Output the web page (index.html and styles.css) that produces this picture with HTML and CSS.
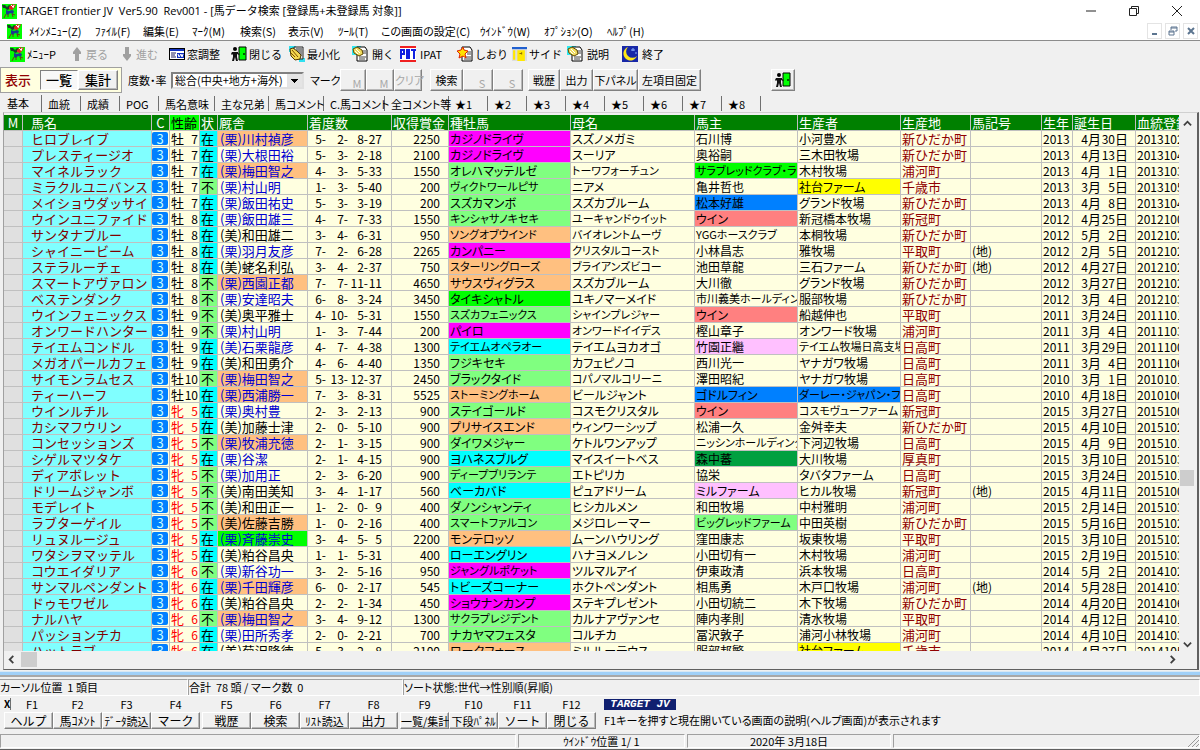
FILE: index.html
```html
<!DOCTYPE html>
<html lang="ja">
<head>
<meta charset="utf-8">
<title>TARGET frontier JV</title>
<link rel="stylesheet" href="styles.css">
</head>
<body>
<svg class="defs" aria-hidden="true">
  <symbol id="horse" viewBox="0 0 15 15">
    <rect width="15" height="15" fill="#0f0"/>
    <path d="M0 1h3l2 2 2-2 2 1-1 3-3 1-2-2H1z" fill="#1c3c2a"/>
    <path d="M7 3l3-3 2 1 2-1-1 3-3 3-3-1z" fill="#e02020"/>
    <path d="M9 1l2 2M12 1l-1 3" stroke="#fff"/>
    <path d="M4 6l3 1 3-1 2 1-1 3-3-1-2 2-2-1z" fill="#1a3a90"/>
    <path d="M2 14l2-4M6 13v-3M11 13l-1-3 3 1" stroke="#703818" fill="none"/>
  </symbol>
  <symbol id="up" viewBox="0 0 10 16"><path d="M5 1l4 5v2H7v7H3V8H1V6z" fill="#a0a0a0"/></symbol>
  <symbol id="down" viewBox="0 0 10 16"><path d="M5 15l4-5V8H7V1H3v7H1v2z" fill="#a0a0a0"/></symbol>
  <symbol id="window" viewBox="0 0 16 14">
    <path d="M0 1h16v12H0z" fill="#000"/><path d="M1 4h14v8H1z" fill="#fff"/><path d="M1 2h14v2H1z" fill="#1030c0"/>
    <path d="M2 6h5M2 8h4M2 10h5" stroke="#202060"/><path d="M8 6h7v5H8z" fill="#1030c0"/><path d="M9 7l1 3 2-3 1 3 1-3" stroke="#fff" fill="none"/>
  </symbol>
  <symbol id="exit" viewBox="0 0 16 16">
    <path d="M8 1h7v13H8z" fill="#0f0" stroke="#000"/><path d="M12 7h2v2h-2z" fill="#006000"/>
    <circle cx="4" cy="3" r="2"/><path d="M1 6h6v1l2 1-1 1-2-1v3l1 4H5l-1-4-1 4H1l1-4V8L1 9 0 8z" fill="#111"/>
  </symbol>
  <symbol id="note" viewBox="0 0 16 16">
    <path d="M0 0h9v9H0z" fill="#30e8f0"/><path d="M5 1h8l2 3v11H5z" fill="#fff" stroke="#000"/>
    <path d="M10 5h4M11 7h3M7 11h7M7 13h6" stroke="#444"/>
    <path d="M1 3l4-2 5 3 1 4-4 2-5-3z" fill="#f0dc60" stroke="#604800"/><path d="M4 3l4 4M3 5l3 3" stroke="#fff"/>
  </symbol>
  <symbol id="mini" viewBox="0 0 16 16">
    <path d="M0 0h7v6H0zM10 12h6v4h-6z" fill="#30e0f0"/><path d="M5 1h9v12H5z" fill="#e8e8e8" stroke="#222"/><path d="M7 3h6M8 5h5M10 7h3M10 9h3" stroke="#333"/>
    <path d="M1 3l3-1 4 3 4 4-1 4-5 1-4-4z" fill="#f4d850" stroke="#503800"/><path d="M3 4l6 7M2 7l4 4" stroke="#805000"/>
  </symbol>
  <symbol id="pat" viewBox="0 0 16 16">
    <path d="M0 0h16v16H0z" fill="#fff"/><path d="M0 0h16v2H0zM0 14h16v2H0z" fill="#f02020"/>
    <path d="M1 13V4h3v4H2M7 13V4h2v9M7 9h2M11 4h5M14 4v9" stroke="#1020e0" stroke-width="2" fill="none"/>
  </symbol>
  <symbol id="star" viewBox="0 0 16 16">
    <path d="M5 1h8l2 3v11H5z" fill="#fff" stroke="#000"/><path d="M10 6h4M10 8h4M8 11h6M7 13h7" stroke="#444"/>
    <path d="M6 1l1 3 4 1-3 3 1 4-3-2-4 2 1-4-3-3 4-1z" fill="#ffe000" stroke="#e02000"/>
  </symbol>
  <symbol id="side" viewBox="0 0 14 14">
    <path d="M0 0h14v13H0z" fill="#ddd"/><path d="M0 0h14v2H0z" fill="#2060d0"/><path d="M1 3h2v9H1zM5 3h7v10H5z" fill="#ffe800"/>
    <path d="M7 6h2M9 5v2" stroke="#907000"/>
  </symbol>
  <symbol id="moon" viewBox="0 0 16 16">
    <path d="M0 0h16v16H0z" fill="#1828a8"/><path d="M6 1a7 7 0 1 0 9 9 6 6 0 0 1-9-9z" fill="#ffe818"/>
    <path d="M11 2v3M9 4h4M14 6v2" stroke="#8ab0ff"/>
  </symbol>
</svg>

<header class="titlebar">
  <svg class="ico15"><use href="#horse"/></svg>
  <h1>TARGET frontier JV&nbsp; Ver5.90&nbsp; Rev001 - [馬データ検索 [登録馬+未登録馬 対象]]</h1>
  <div class="winbtns">
    <button aria-label="最小化"><svg viewBox="0 0 12 12"><path d="M1 6h10" stroke="#222"/></svg></button>
    <button aria-label="元に戻す"><svg viewBox="0 0 12 12"><path d="M1.500 3.500h7v7h-7zM3.500 3V1.500h7v7H9" stroke="#222" fill="none"/></svg></button>
    <button aria-label="閉じる"><svg viewBox="0 0 12 12"><path d="M1 1l10 10M11 1L1 11" stroke="#222"/></svg></button>
  </div>
</header>

<div class="menubar">
  <svg class="ico15"><use href="#horse"/></svg>
  <nav class="menu">
    <button>ﾒｲﾝﾒﾆｭｰ(Z)</button><button>ﾌｧｲﾙ(F)</button><button>編集(E)</button><button>ﾏｰｸ(M)</button><button>検索(S)</button><button>表示(V)</button><button>ﾂｰﾙ(T)</button><button>この画面の設定(C)</button><button>ｳｲﾝﾄﾞｳ(W)</button><button>ｵﾌﾟｼｮﾝ(O)</button><button>ﾍﾙﾌﾟ(H)</button>
  </nav>
  <div class="mdibtns">
    <button aria-label="子画面を最小化"><svg viewBox="0 0 10 10"><path d="M2 8h5" stroke="#5c7590" stroke-width="2"/></svg></button>
    <button aria-label="子画面を元に戻す"><svg viewBox="0 0 10 10"><path d="M1 5h5v4H1zM3 4V1h6v4H7M3 2h6M1 6h5" stroke="#5c7590" fill="none"/></svg></button>
    <button aria-label="子画面を閉じる"><svg viewBox="0 0 10 10"><path d="M2 2l6 6M8 2L2 8" stroke="#5c7590" stroke-width="2"/></svg></button>
  </div>
</div>

<div class="toolbar">
  <button class="tool"><svg class="ico15"><use href="#horse"/></svg>ﾒﾆｭｰP</button>
  <button class="tool" disabled><svg class="arrow"><use href="#up"/></svg>戻る</button>
  <button class="tool" disabled><svg class="arrow"><use href="#down"/></svg>進む</button>
  <button class="tool"><svg class="ico16"><use href="#window"/></svg>窓調整</button>
  <button class="tool"><svg class="ico16"><use href="#exit"/></svg>閉じる</button>
  <button class="tool"><svg class="ico16"><use href="#mini"/></svg>最小化</button>
  <button class="tool spaced"><svg class="ico16"><use href="#note"/></svg>開く</button>
  <button class="tool spaced"><svg class="ico16"><use href="#pat"/></svg>IPAT</button>
  <button class="tool"><svg class="ico16"><use href="#star"/></svg>しおり</button>
  <button class="tool"><svg class="ico15"><use href="#side"/></svg>サイド</button>
  <button class="tool spaced"><svg class="ico16"><use href="#note"/></svg>説明</button>
  <button class="tool spaced"><svg class="ico16"><use href="#moon"/></svg>終了</button>
</div>

<div class="controls">
  <div class="viewbox"><strong>表示</strong><button class="raised pressed">一覧</button><button class="raised">集計</button></div>
  <label for="rate">度数・率</label>
  <select id="rate"><option>総合(中央+地方+海外)</option></select>
  <span class="marklabel">マーク</span>
  <div class="group marks"><button class="raised low" disabled>M</button><button class="raised low" disabled>M</button><button class="raised" disabled>クリア</button></div>
  <div class="group search"><button class="raised">検索</button><button class="raised low" disabled>S</button><button class="raised low" disabled>S</button></div>
  <div class="group output"><button class="raised">戦歴</button><button class="raised">出力</button><button class="raised">下パネル</button><button class="raised">左項目固定</button></div>
  <button class="raised exit" aria-label="画面を閉じる"><svg class="ico16"><use href="#exit"/></svg></button>
</div>

<nav class="tabs">
  <button class="active">基本</button><button>血統</button><button>成績</button><button>POG</button><button>馬名意味</button><button>主な兄弟</button><button>馬コメント</button><button>C.馬コメント</button><button>全コメント等</button><button>★1</button><button>★2</button><button>★3</button><button>★4</button><button>★5</button><button>★6</button><button>★7</button><button>★8</button>
</nav>

<main class="panel">
  <div class="view">
    <table class="horses">
      <colgroup>
        <col class="c-m"><col class="c-name"><col class="c-c"><col class="c-sex"><col class="c-st"><col class="c-stable"><col class="c-rec"><col class="c-prize"><col class="c-sire"><col class="c-dam"><col class="c-owner"><col class="c-breeder"><col class="c-place"><col class="c-sign"><col class="c-year"><col class="c-birth"><col class="c-id">
      </colgroup>
      <thead><tr><th class="center">M</th><th class="name">馬名</th><th class="center">C</th><th class="sorted">性齢</th><th>状</th><th>厩舎</th><th>着度数</th><th>収得賞金</th><th>種牡馬</th><th>母名</th><th>馬主</th><th>生産者</th><th>生産地</th><th>馬記号</th><th>生年</th><th>誕生日</th><th>血統登録番号</th></tr></thead>
      <tbody id="rows"></tbody>
    </table>
  </div>
  <div class="vscroll"><svg viewBox="0 0 10 10"><path d="M1 7l4-4 4 4" class="chev"/></svg><i class="thumb"></i><svg viewBox="0 0 10 10"><path d="M1 3l4 4 4-4" class="chev"/></svg></div>
  <div class="hscroll"><svg viewBox="0 0 10 10"><path d="M7 1L3 5l4 4" class="chev"/></svg><i class="thumb"></i><svg viewBox="0 0 10 10"><path d="M3 1l4 4-4 4" class="chev"/></svg></div>
</main>
<div class="splitter"></div>

<div class="summary"><span>カーソル位置&nbsp; 1 頭目</span><span>合計&nbsp; 78 頭 / マーク数&nbsp; 0</span><span>ソート状態:世代→性別順(昇順)</span></div>

<footer class="keys">
  <div class="keygroup">
    <div class="key"><label for="f1"><b class="x">X</b>F1</label><button id="f1" class="raised">ヘルプ</button></div>
    <div class="key"><label for="f2">F2</label><button id="f2" class="raised">馬ｺﾒﾝﾄ</button></div>
    <div class="key"><label for="f3">F3</label><button id="f3" class="raised long">ﾃﾞｰﾀ読込</button></div>
    <div class="key"><label for="f4">F4</label><button id="f4" class="raised">マーク</button></div>
  </div>
  <div class="keygroup">
    <div class="key"><label for="f5">F5</label><button id="f5" class="raised">戦歴</button></div>
    <div class="key"><label for="f6">F6</label><button id="f6" class="raised">検索</button></div>
    <div class="key"><label for="f7">F7</label><button id="f7" class="raised long">ﾘｽﾄ読込</button></div>
    <div class="key"><label for="f8">F8</label><button id="f8" class="raised">出力</button></div>
  </div>
  <div class="keygroup">
    <div class="key"><label for="f9">F9</label><button id="f9" class="raised long">一覧/集計</button></div>
    <div class="key"><label for="f10">F10</label><button id="f10" class="raised long">下段ﾊﾟﾈﾙ</button></div>
    <div class="key"><label for="f11">F11</label><button id="f11" class="raised">ソート</button></div>
    <div class="key"><label for="f12">F12</label><button id="f12" class="raised">閉じる</button></div>
  </div>
  <div class="help"><span class="brand">TARGET JV</span><p>F1キーを押すと現在開いている画面の説明(ヘルプ画面)が表示されます</p></div>
</footer>

<div class="statusbar">
  <span></span><span>ｳｲﾝﾄﾞｳ位置 1/ 1</span><span>2020年 3月18日</span>
  <span class="grip"><svg viewBox="0 0 12 12"><path d="M1 12L12 1M5 12l7-7M9 12l3-3" stroke="#999"/></svg></span>
</div>
<script src="rows.js"></script>
</body>
</html>
```

FILE: styles.css
```css
* { box-sizing: border-box; }
body {
  margin: 0;
  height: 100vh;
  display: flex;
  flex-direction: column;
  overflow: hidden;
  background: #f0f0f0;
  color: #000;
  font: 11px/16px "Noto Sans CJK JP", sans-serif;
}
button {
  font: inherit;
  color: inherit;
  padding: 0;
  border: 0;
  background: none;
  white-space: nowrap;
  text-align: left;
}
svg { flex: none; }
.defs { display: none; }
.ico15 { width: 15px; height: 15px; }
.ico16 { width: 16px; height: 16px; }
.arrow { width: 10px; height: 16px; }

.titlebar {
  display: flex;
  align-items: center;
  height: 22px;
  padding-left: 2px;
  gap: 2px;
  background: #fff;
}
h1 { margin: 0; flex: 1; font: 11px/16px "Open Sans", "Noto Sans CJK JP", sans-serif; }
.winbtns { display: flex; gap: 31px; padding-right: 17px; }
.winbtns button, .winbtns svg { display: block; width: 12px; height: 12px; }

.menubar {
  display: flex;
  align-items: center;
  height: 19px;
  padding: 0 2px 0 7px;
  gap: 7px;
  background: #fff;
  border-bottom: 1px solid #8c8c8c;
  font-feature-settings: "palt";
}
.menu {
  flex: 1;
  display: grid;
  grid-template-columns: 66px 48px 49px 48px 48px 50px 43px 99px 64px 63px 60px;
}
.mdibtns { display: flex; gap: 3px; }
.mdibtns button { width: 15px; height: 16px; border: 1px solid #e4e4e4; padding: 2px; }
.mdibtns svg { display: block; width: 10px; height: 10px; }

.toolbar {
  display: grid;
  grid-template-columns: 62px 50px 47px 62px 58px 63px 48px 57px 55px 55px 55px 60px;
  height: 26px;
  padding-left: 10px;
  align-items: center;
}
.tool { display: flex; align-items: center; gap: 2px; }
.tool.spaced { gap: 4px; }
.tool:disabled { color: #a0a0a0; gap: 4px; }

.controls { display: flex; align-items: center; height: 26px; font-feature-settings: "palt"; white-space: nowrap; }
.viewbox {
  display: grid;
  grid-template-columns: 35px 38px 40px;
  align-items: center;
  width: 122px;
  height: 26px;
  padding: 0 4px;
  margin-right: 6px;
  background: #ffffe0;
  border: 1px solid #a0a0a0;
  font-size: 13px;
}
.viewbox strong { color: #900000; font-weight: 500; }
.viewbox .raised { height: 20px; line-height: 18px; font-weight: 500; }
.controls label { width: 43px; }
select {
  width: 133px;
  height: 17px;
  padding: 0 0 0 2px;
  border: 2px solid;
  border-color: #808080 #e0e0e0 #e0e0e0 #808080;
  border-radius: 0;
  appearance: none;
  font: inherit;
  line-height: 13px;
  color: #000;
  background:
    linear-gradient(#000, #000) right 4px top 5px / 7px 1px no-repeat,
    linear-gradient(#000, #000) right 5px top 6px / 5px 1px no-repeat,
    linear-gradient(#000, #000) right 6px top 7px / 3px 1px no-repeat,
    linear-gradient(#000, #000) right 7px top 8px / 1px 1px no-repeat,
    linear-gradient(#e4e4e4, #e4e4e4) right / 15px 100% no-repeat,
    #fff;
}
.marklabel { width: 30px; margin-left: 6px; }
.raised {
  height: 22px;
  border: 1px solid;
  border-color: #fff #808080 #808080 #fff;
  box-shadow: inset -1px -1px #b8b8b8;
  background: #f0f0f0;
  text-align: center;
}
.raised:disabled { color: #a8a8a8; }
.raised.pressed { border-color: #808080 #fff #fff #808080; box-shadow: none; background: #f8f8f8; }
.raised.low { padding: 5px 0 0 8px; line-height: 14px; }
.group { display: grid; }
.marks { grid-template-columns: 26px 28px 28px; margin-right: 8px; }
.search { grid-template-columns: 33px 30px 30px; margin-right: 5px; }
.output { grid-template-columns: 32px 33px 45px 63px; }
.exit { display: grid; place-items: center; width: 24px; margin-left: 70px; }

.tabs {
  display: grid;
  grid-template-columns: 42px 39px 39px 39px 56px 54px 55px 61px 64px repeat(8, 39px);
  height: 19px;
  padding-top: 2px;
  font-feature-settings: "palt";
}
.tabs button { margin-top: 1px; height: 15px; padding-left: 6px; border-right: 1px solid #707070; }
.tabs .active { margin: 0; height: 17px; padding: 0 0 3px 7px; }

.panel {
  flex: 1;
  min-height: 0;
  display: grid;
  grid-template: minmax(0, 1fr) 18px / minmax(0, 1fr) 16px;
  margin: 0 1px 0 3px;
  padding: 2px 2px 0 0;
  border: 1px solid #a0a0a0;
  border-top-color: #d0d0d0;
  border-right: 2px solid #606060;
  border-bottom: 1px solid #606060;
  background: #f0f0f0;
}
.view { overflow: hidden; background: #ffffe0; }
.vscroll { display: flex; flex-direction: column; align-items: center; padding: 4px 0 2px; }
.vscroll svg, .hscroll svg { width: 9px; height: 9px; }
.vscroll .thumb { width: 14px; height: 16px; margin: 342px 0 auto; background: #cdcdcd; }
.hscroll { grid-column: 1 / 3; display: flex; align-items: flex-start; padding: 1px 18px 0 3px; }
.hscroll .thumb { width: 16px; height: 15px; margin: 0 auto 0 5px; background: #cdcdcd; }
.hscroll svg { margin-top: 3px; }
.chev { fill: none; stroke: #404040; stroke-width: 2; }

.horses { width: 1232px; table-layout: fixed; border-collapse: separate; border-spacing: 0; font-size: 13px; }
.c-m { width: 19px; } .c-name { width: 129px; } .c-c { width: 18px; } .c-sex { width: 30px; }
.c-st { width: 18px; } .c-stable { width: 90px; } .c-rec { width: 84px; } .c-prize { width: 57px; }
.c-sire { width: 122px; } .c-dam { width: 124px; } .c-owner { width: 103px; } .c-breeder { width: 103px; }
.c-place { width: 70px; } .c-sign { width: 71px; } .c-year { width: 31px; } .c-birth { width: 63px; } .c-id { width: 100px; }
th, td {
  height: 16px;
  padding: 0 0 0 1px;
  border: solid #c0c0c0;
  border-width: 0 1px 1px 0;
  line-height: 15px;
  text-align: left;
  white-space: nowrap;
  overflow: hidden;
}
th { background: #008000; color: #fff; font-weight: 400; }
th.name, td.name { padding-left: 8px; }
.center { text-align: center; padding: 0; }
th.sorted { background: #00ff00; color: #000; }
td.mark { background: #e0e0e0; }
td.name { background: #80ffff; color: #800000; }
td.c { padding: 0 1px 0 0; }
td.c span { display: block; height: 13px; line-height: 13px; background: #0080ff; color: #c8ffff; text-align: center; border-radius: 2px; }
td.stable { padding-left: 2px; }
td.blue { color: #0000d0; }
td.female { color: #ff0000; }
td.place { color: #900000; }
td.num, td.kana, td.sex, td.birth { font-size: 12px; }
td.sex b, td.birth b { font-weight: 400; font-size: 13px; }
td.kana { font-feature-settings: "palt"; }
td.long { font-size: 11px; }
td.prize { text-align: right; padding-right: 8px; }
td i { display: inline-block; width: 20px; font-style: normal; text-align: right; }
td.sex i, td.birth i, td.rec i:last-child { width: 14px; }
td.rec { padding-left: 0; }
td.rec i:first-child { padding-right: 2px; }
.cyan { background: #00ffff; }
.magenta { background: #ff00ff; }
.green { background: #80ff80; }
.orange { background: #ffc080; }
.lime { background: #00ff00; }
.azure { background: #0080ff; }
.red { background: #ff8080; }
.pink { background: #ffc0ff; }
.forest { background: #00a040; }
.yellow { background: #ffff00; }

.splitter { height: 6px; margin: 1px 0 2px; background: #a0d0f8; border-bottom: 2px solid #a8a8a8; border-top: 1px solid #d8e8f4; }
.summary { display: grid; grid-template-columns: 188px 215px 1fr; height: 17px; border-bottom: 1px solid #fff; font-feature-settings: "palt"; }
.summary span { border-top: 1px solid #a0a0a0; border-right: 1px solid #fff; line-height: 15px; }
.summary span + span { border-left: 1px solid #a0a0a0; }

.keys { display: flex; height: 33px; padding-left: 4px; gap: 2px; }
.keygroup { display: grid; grid-template-columns: repeat(4, 49px); }
.key { display: flex; flex-direction: column; text-align: center; }
.key label { height: 16px; }
.key .raised { height: 17px; line-height: 14px; font-size: 12px; }
.key .raised.long { font-size: 11px; }
.x { float: left; border-right: 1px solid #707070; line-height: 12px; font-size: 10px; margin-top: 2px; }
.help { padding: 3px 0 0 6px; }
.brand {
  display: block;
  width: 72px;
  height: 11px;
  background: #102070;
  color: #fff;
  font: italic bold 11px/11px "Liberation Mono", monospace;
  text-align: center;
}
.help p { margin: 2px 0 0; font-feature-settings: "palt"; white-space: nowrap; }

.statusbar { display: grid; grid-template-columns: 516px 167px 204px 1fr; gap: 2px; height: 16px; margin-top: 5px; padding-bottom: 1px; border-bottom: 1px solid #606060; }
.statusbar span { border: 1px solid; border-color: #a0a0a0 #fff #fff #a0a0a0; line-height: 12px; text-align: center; }
.statusbar .grip { display: flex; justify-content: flex-end; }
.grip svg { width: 12px; height: 12px; }
```

FILE: rows.js
```js
// name | sex age | status | stable [colour] | record | prize | sire [colour] | dam | owner [colour] | breeder [colour] | place | sign | year | birthday | registration prefix
const data = `ヒロブレイブ|牡 7|在|(栗)川村禎彦 orange|5-2-8-27|2250|カジノドライヴ magenta|スズノメガミ|石川博|小河豊水|新ひだか町||2013|4/30|2
プレスティージオ|牡 7|在|(栗)大根田裕|5-3-2-18|2100|カジノドライヴ magenta|スーリア|奥裕嗣|三木田牧場|新ひだか町||2013|4/13|4
マイネルラック|牡 7|在|(栗)梅田智之 orange|4-3-5-33|1550|オレハマッテルゼ green|トーワフォーチュン|サラブレッドクラブ・ラフィアン lime|木村牧場|浦河町||2013|4/1|3
ミラクルユニバンス|牡 7|不|(栗)村山明|1-3-5-40|200|ヴィクトワールピサ green|ニアメ|亀井哲也|社台ファーム yellow|千歳市||2013|3/5|5
メイショウダッサイ|牡 7|在|(栗)飯田祐史|5-3-3-19|200|スズカマンボ green|スズカブルーム|松本好雄 azure|グランド牧場|新ひだか町||2013|4/8|4
ウインユニファイド|牡 8|在|(栗)飯田雄三|4-7-7-33|1550|キンシャサノキセキ green|ユーキャンドゥイット|ウイン red|新冠橋本牧場|新冠町||2012|4/25|0
サンタナブルー|牡 8|在|(美)和田雄二|3-4-6-31|950|ソングオブウインド orange|バイオレントムーヴ|YGGホースクラブ|本桐牧場|新ひだか町||2012|5/2|2
シャイニービーム|牡 8|在|(栗)羽月友彦|7-2-6-28|2265|カンパニー magenta|クリスタルコースト|小林昌志|雅牧場|平取町|(地)|2012|2/5|2
ステラルーチェ|牡 8|在|(美)蛯名利弘|3-4-2-37|750|スターリングローズ orange|ブライアンズビコー|池田草龍|三石ファーム|新ひだか町|(地)|2012|4/27|2
スマートアヴァロン|牡 8|不|(栗)西園正都 orange|7-7-11-11|4650|サウスヴィグラス orange|スズカブルーム|大川徹|グランド牧場|新ひだか町||2012|3/27|2
ベステンダンク|牡 8|不|(栗)安達昭夫|6-8-3-24|3450|タイキシャトル lime|ユキノマーメイド|市川義美ホールディングス|服部牧場|新ひだか町||2012|3/4|3
ウインフェニックス|牡 9|不|(美)奥平雅士|4-10-5-31|1550|スズカフェニックス green|シャインプレジャー|ウイン red|船越伸也|平取町||2011|3/24|1
オンワードハンター|牡 9|不|(栗)村山明|1-3-7-44|200|パイロ magenta|オンワードイイデス|樫山章子|オンワード牧場|浦河町||2011|3/4|3
テイエムコンドル|牡 9|在|(美)石栗龍彦|4-7-4-38|1300|テイエムオペラオー cyan|テイエムヨカオゴ|竹園正繼 pink|テイエム牧場日高支場|日高町||2011|3/29|0
メガオパールカフェ|牡 9|在|(美)和田勇介|4-6-4-40|1350|フジキセキ green|カフェピノコ|西川光一|ヤナガワ牧場|日高町||2011|3/4|6
サイモンラムセス|牡10|不|(栗)梅田智之 orange|5-13-12-37|2450|ブラックタイド green|コパノマルコリーニ|澤田昭紀|ヤナガワ牧場|日高町||2010|3/1|1
ティーハーフ|牡10|在|(栗)西浦勝一 orange|7-3-8-31|5525|ストーミングホーム orange|ビールジャント|ゴドルフィン azure|ダーレー・ジャパン・ファーム azure|日高町||2010|4/18|0
ウインルチル|牝 5|在|(栗)奥村豊|2-3-2-13|900|ステイゴールド green|コスモクリスタル|ウイン red|コスモヴューファーム|新冠町||2015|3/27|0
カシマフウリン|牝 5|在|(美)加藤士津|2-0-5-10|900|プリサイスエンド orange|ウィンワーシップ|松浦一久|金舛幸夫|新ひだか町||2015|4/10|2
コンセッションズ|牝 5|不|(栗)牧浦充徳 orange|2-1-3-15|900|ダイワメジャー green|ケトルワンアップ|ニッシンホールディングス|下河辺牧場|日高町||2015|4/9|1
シゲルマツタケ|牝 5|在|(栗)谷潔|2-1-4-15|900|ヨハネスブルグ cyan|マイスイートベス|森中蕃 forest|大川牧場|厚真町||2015|3/10|3
ディアボレット|牝 5|不|(栗)加用正|2-3-6-20|900|ディープブリランテ green|エトピリカ|協栄|タバタファーム|日高町||2015|3/24|1
ドリームジャンボ|牝 5|不|(美)南田美知|3-4-1-17|560|ベーカバド cyan|ピュアドリーム|ミルファーム pink|ヒカル牧場|新冠町|(地)|2015|4/11|0
モデレイト|牝 5|不|(美)和田正一|1-2-0-9|400|ダノンシャンティ green|ヒシカルメン|和田牧場|中村雅明|浦河町||2015|2/14|3
ラブターゲイル|牝 5|不|(美)佐藤吉勝 orange|1-0-2-16|400|スマートファルコン green|メジロレーマー|ビッグレッドファーム green|中田英樹|新ひだか町||2015|5/16|2
リュヌルージュ|牝 5|在|(栗)斉藤崇史 lime|3-4-5-5|2200|モンテロッソ orange|ムーンハウリング|窪田康志|坂東牧場|平取町||2015|3/10|2
ワタシヲマッテル|牝 5|在|(美)粕谷昌央|1-1-5-31|400|ローエングリン cyan|ハナヨメノレン|小田切有一|木村牧場|浦河町||2015|2/19|3
コウエイダリア|牝 6|不|(栗)新谷功一|3-2-5-16|950|ジャングルポケット magenta|ツルマルアイ|伊東政清|浜本牧場|日高町||2014|5/2|2
サンマルペンダント|牝 6|在|(栗)千田輝彦 orange|6-0-2-17|545|トビーズコーナー cyan|ホクトペンダント|相馬勇|木戸口牧場|浦河町|(地)|2014|5/28|3
ドゥモワゼル|牝 6|在|(美)粕谷昌央|2-2-1-34|450|ショウナンカンプ magenta|ステキプレゼント|小田切統二|木下牧場|新ひだか町||2014|4/20|6
ナルハヤ|牝 6|不|(栗)梅田智之 orange|3-4-9-12|1300|サクラプレジデント green|カルナアヴァンセ|陣内孝則|清水牧場|平取町||2014|4/12|1
パッションチカ|牝 6|在|(栗)田所秀孝|2-0-2-21|700|ナカヤマフェスタ green|コルチカ|冨沢敦子|浦河小林牧場|浦河町||2014|4/10|3
ハットラブ|牝 6|在|(美)菊沢隆徳|5-3-2-8|2100|ロークフォース orange|ミルルーテウス|服部邦繁|社台ファーム yellow|千歳市||2014|4/27|5`;

const cell = (cls, value) => {
  const [text, colour = ""] = value.split(" ");
  const size = cls === "kana" && text.length > 8 ? "long" : "";
  return `<td class="${cls} ${size} ${colour}">${text}</td>`;
};

document.getElementById("rows").innerHTML = data.split("\n").map(line => {
  const [name, sex, status, stable, record, prize, sire, dam, owner, breeder, place, sign, year, birth, reg] = line.split("|");
  const rec = record.split("-").map((n, i) => `<i>${n}${i < 3 ? "-" : ""}</i>`).join("");
  const [month, day] = birth.split("/");
  return `<tr><td class="mark"></td><td class="name">${name}</td><td class="c"><span>3</span></td>` +
    `<td class="sex ${sex[0] === "牝" ? "female" : ""}"><b>${sex[0]}</b><i>${sex.slice(1).trim()}</i></td>` +
    `<td class="${status === "在" ? "cyan" : "green"}">${status}</td>` +
    cell(stable.includes("栗") ? "stable blue" : "stable", stable) +
    `<td class="num rec">${rec}</td><td class="num prize">${prize}</td>` +
    cell("kana", sire) + cell("kana", dam) + cell("kana", owner) + cell("kana", breeder) +
    `<td class="place">${place}</td><td class="kana">${sign}</td><td class="num">${year}</td>` +
    `<td class="birth"><i>${month}</i><b>月</b><i>${day}</i><b>日</b></td><td class="num">${year}10${reg}</td></tr>`;
}).join("");
```
